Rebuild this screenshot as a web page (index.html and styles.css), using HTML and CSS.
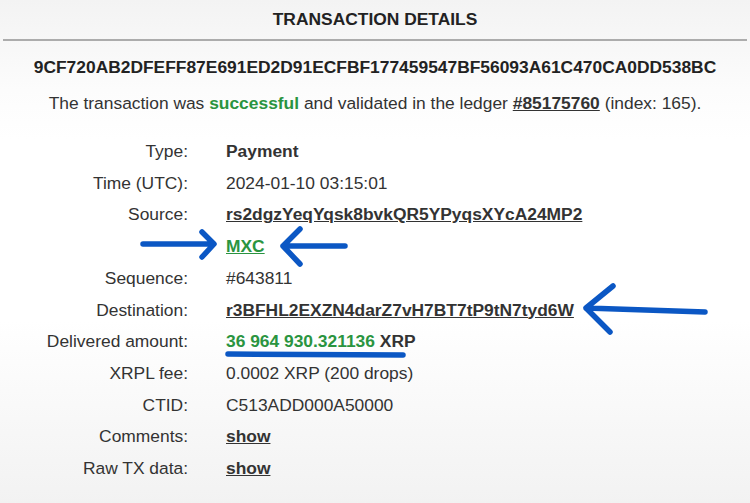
FILE: index.html
```html
<!DOCTYPE html>
<html>
<head>
<meta charset="utf-8">
<link rel="stylesheet" href="styles.css">
</head>
<body>
<div class="page">
  <div class="header">TRANSACTION DETAILS</div>
  <div class="hash">9CF720AB2DFEFF87E691ED2D91ECFBF177459547BF56093A61C470CA0DD538BC</div>
  <div class="status">The transaction was <span class="green bold">successful</span> and validated in the ledger <a class="link" href="#">#85175760</a> (index: 165).</div>
  <div class="details">
    <div class="label">Type:</div><div class="value bold">Payment</div>
    <div class="label">Time (UTC):</div><div class="value">2024-01-10 03:15:01</div>
    <div class="label">Source:</div><div class="value"><a class="link" href="#">rs2dgzYeqYqsk8bvkQR5YPyqsXYcA24MP2</a></div>
    <div class="label"></div><div class="value"><a class="link green-link" href="#">MXC</a></div>
    <div class="label">Sequence:</div><div class="value">#643811</div>
    <div class="label">Destination:</div><div class="value"><a class="link" href="#">r3BFHL2EXZN4darZ7vH7BT7tP9tN7tyd6W</a></div>
    <div class="label">Delivered amount:</div><div class="value bold"><span class="green">36 964 930.321136</span> XRP</div>
    <div class="label">XRPL fee:</div><div class="value">0.0002 XRP (200 drops)</div>
    <div class="label">CTID:</div><div class="value">C513ADD000A50000</div>
    <div class="label">Comments:</div><div class="value"><a class="link" href="#">show</a></div>
    <div class="label">Raw TX data:</div><div class="value"><a class="link" href="#">show</a></div>
  </div>
  <svg class="marks" width="750" height="503" viewBox="0 0 750 503">
    <g fill="none" stroke="#0b57c4" stroke-width="5.5" stroke-linecap="round" stroke-linejoin="round">
      <path d="M143 244 L213 244 M202 232 L214 244 L202 257"/>
      <path d="M283 246 L345 246 M300 229 L283 246 L300 264"/>
      <path d="M586 308 L705 312 M613 286 L586 308 L610 332"/>
      <path d="M228 354 L403 355"/>
    </g>
  </svg>
</div>
</body>
</html>
```
FILE: styles.css
```css
html, body {
  margin: 0;
  padding: 0;
}
body {
  font-family: "Liberation Sans", Arial, sans-serif;
  color: #333;
  background: linear-gradient(to bottom, #f3f3f3 0px, #fcfcfc 90px, #ffffff 140px, #ffffff 320px, #f2f2f2 503px);
  width: 750px;
  height: 503px;
  overflow: hidden;
}
.page {
  position: relative;
  width: 750px;
  height: 503px;
}
.header {
  height: 38px;
  margin: 0 3px;
  display: flex;
  align-items: center;
  justify-content: center;
  padding-bottom: 1px;
  font-weight: bold;
  font-size: 17.4px;
  color: #222;
  border-bottom: 2px solid #acacac;
}
.hash {
  margin-top: 15px;
  line-height: 22px;
  font-size: 17.4px;
  font-weight: bold;
  color: #222;
  text-align: center;
}
.status {
  margin-top: 14px;
  line-height: 22px;
  font-size: 17.4px;
  text-align: center;
}
.bold {
  font-weight: bold;
}
.green {
  color: #2a9440;
}
.link {
  color: #333;
  font-weight: bold;
  text-decoration: underline;
}
.green-link {
  color: #2a9440;
}
.details {
  margin-top: 22px;
  display: grid;
  grid-template-columns: 188px auto;
  column-gap: 38px;
  font-size: 17.4px;
  line-height: 31.7px;
}
.label {
  text-align: right;
}
.value {
  white-space: nowrap;
}
.marks {
  position: absolute;
  left: 0;
  top: 0;
  pointer-events: none;
}
```
